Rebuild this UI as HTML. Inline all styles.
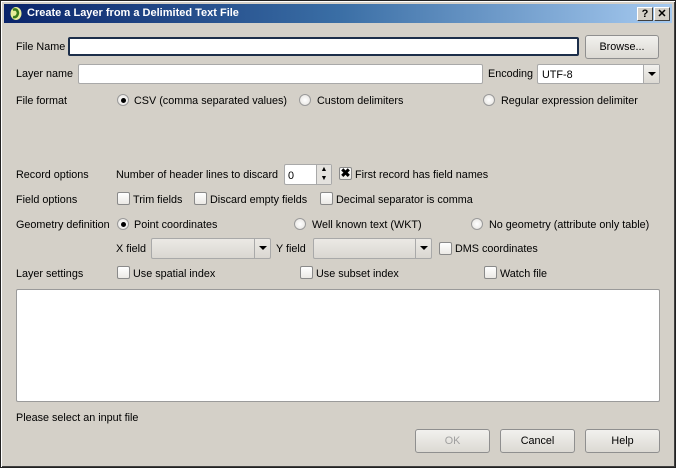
<!DOCTYPE html>
<html><head><style>
*{box-sizing:border-box;margin:0;padding:0}
body{width:676px;height:468px;background:#d4d0c8;font-family:"Liberation Sans",sans-serif;font-size:10.8px;color:#000;position:relative;overflow:hidden}
.frame{position:absolute;left:0;top:0;width:676px;height:468px;border:1px solid #222;box-shadow:inset 1px 1px 0 #fff,inset -1px -1px 0 #404040}
.a{position:absolute;white-space:nowrap;margin-top:1px}
.title{position:absolute;left:4px;top:4px;width:668px;height:19px;background:linear-gradient(to right,#0a246a,#3a6ea5 50%,#a6caf0)}
.tt{position:absolute;left:23px;top:3px;color:#fff;font-weight:bold;font-size:11px}
.tb{position:absolute;top:3px;width:16px;height:14px;background:#d4d0c8;border:1px solid;border-color:#fff #404040 #404040 #fff;font-weight:bold;font-size:11px;text-align:center;line-height:12px}
.in{position:absolute;background:#fff;border:1px solid #a9a9a9;border-radius:2px}
.btn{position:absolute;border:1px solid #8f8f8f;border-radius:3px;background:linear-gradient(#f2f1ee,#dcd9d3);text-align:center;line-height:22px}
.combo{position:absolute;border:1px solid #a9a9a9;border-radius:2px;background:linear-gradient(#ebe9e5,#dad7d1)}
.combo .arr{position:absolute;right:0;top:0;bottom:0;width:16px;border-left:1px solid #a9a9a9}
.combo .arr:after{content:"";position:absolute;left:4px;top:7px;border:4px solid transparent;border-top:4px solid #000;border-bottom:0}
.rb{position:absolute;width:12px;height:12px;border-radius:50%;border:1px solid #9a9a9a;background:radial-gradient(#fff,#e4e2de)}
.rb.on:after{content:"";position:absolute;left:2.5px;top:2.5px;width:5px;height:5px;border-radius:50%;background:#000}
.cb{position:absolute;width:13px;height:13px;border:1px solid #8a8a8a;border-radius:2px;background:linear-gradient(#fff,#ebe9e5)}
</style></head><body>
<div class="frame"></div>
<div class="title">
<svg style="position:absolute;left:5px;top:2px" width="14" height="15"><ellipse cx="7" cy="7.5" rx="5.5" ry="6.5" fill="#e8ec9a"/><path d="M4 4 Q8 2 9 7 Q8 12 4 11" stroke="#3a7a1a" stroke-width="2.5" fill="none"/></svg>
<div class="tt">Create a Layer from a Delimited Text File</div>
<div class="tb" style="left:633px">?</div><div class="tb" style="left:650px">✕</div>
</div>

<div class="a" style="left:16px;top:40px">File Name</div>
<div class="in" style="left:68px;top:37px;width:511px;height:19px;border:2px solid #1c2e4a"></div>
<div class="btn" style="left:585px;top:35px;width:74px;height:24px">Browse...</div>

<div class="a" style="left:16px;top:67px">Layer name</div>
<div class="in" style="left:78px;top:64px;width:405px;height:20px"></div>
<div class="a" style="left:488px;top:67px">Encoding</div>
<div class="combo" style="left:537px;top:64px;width:123px;height:20px;background:#fff"><span class="a" style="left:4px;top:3px">UTF-8</span><div class="arr" style="background:linear-gradient(#f2f1ee,#dcd9d3)"></div></div>

<div class="a" style="left:16px;top:94px">File format</div>
<div class="rb on" style="left:117px;top:94px"></div><div class="a" style="left:134px;top:94px">CSV (comma separated values)</div>
<div class="rb" style="left:299px;top:94px"></div><div class="a" style="left:317px;top:94px">Custom delimiters</div>
<div class="rb" style="left:483px;top:94px"></div><div class="a" style="left:501px;top:94px">Regular expression delimiter</div>

<div class="a" style="left:16px;top:168px">Record options</div>
<div class="a" style="left:116px;top:168px">Number of header lines to discard</div>
<div class="in" style="left:284px;top:164px;width:48px;height:21px"><span class="a" style="left:3px;top:4px">0</span><div style="position:absolute;right:0;top:0;bottom:0;width:15px;border-left:1px solid #a9a9a9;background:#e4e2de;font-size:7px;line-height:9px;text-align:center">▲<br>▼</div></div>
<div class="cb" style="left:339px;top:167px;font-weight:bold;font-size:12px;line-height:11px;text-align:center">✖</div><div class="a" style="left:355px;top:168px">First record has field names</div>

<div class="a" style="left:16px;top:193px">Field options</div>
<div class="cb" style="left:117px;top:192px"></div><div class="a" style="left:133px;top:193px">Trim fields</div>
<div class="cb" style="left:194px;top:192px"></div><div class="a" style="left:210px;top:193px">Discard empty fields</div>
<div class="cb" style="left:320px;top:192px"></div><div class="a" style="left:336px;top:193px">Decimal separator is comma</div>

<div class="a" style="left:16px;top:218px">Geometry definition</div>
<div class="rb on" style="left:117px;top:218px"></div><div class="a" style="left:134px;top:218px">Point coordinates</div>
<div class="rb" style="left:294px;top:218px"></div><div class="a" style="left:312px;top:218px">Well known text (WKT)</div>
<div class="rb" style="left:471px;top:218px"></div><div class="a" style="left:489px;top:218px">No geometry (attribute only table)</div>

<div class="a" style="left:116px;top:242px">X field</div>
<div class="combo" style="left:151px;top:238px;width:120px;height:21px"><div class="arr"></div></div>
<div class="a" style="left:276px;top:242px">Y field</div>
<div class="combo" style="left:313px;top:238px;width:119px;height:21px"><div class="arr"></div></div>
<div class="cb" style="left:439px;top:242px"></div><div class="a" style="left:455px;top:242px">DMS coordinates</div>

<div class="a" style="left:16px;top:267px">Layer settings</div>
<div class="cb" style="left:117px;top:266px"></div><div class="a" style="left:133px;top:267px">Use spatial index</div>
<div class="cb" style="left:300px;top:266px"></div><div class="a" style="left:316px;top:267px">Use subset index</div>
<div class="cb" style="left:484px;top:266px"></div><div class="a" style="left:500px;top:267px">Watch file</div>

<div class="in" style="left:16px;top:289px;width:644px;height:113px;border-color:#9a9a9a"></div>
<div class="a" style="left:16px;top:411px">Please select an input file</div>

<div class="btn" style="left:415px;top:429px;width:75px;height:24px;color:#a0a0a0">OK</div>
<div class="btn" style="left:500px;top:429px;width:75px;height:24px">Cancel</div>
<div class="btn" style="left:585px;top:429px;width:75px;height:24px">Help</div>
</body></html>
